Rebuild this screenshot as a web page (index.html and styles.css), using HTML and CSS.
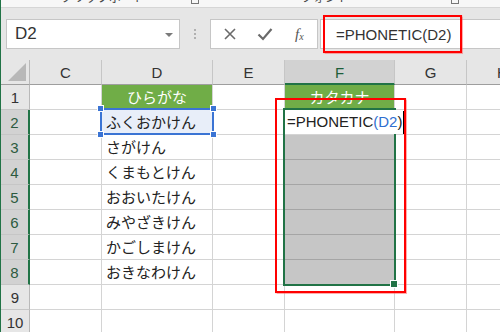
FILE: index.html
```html
<!DOCTYPE html>
<html lang="ja">
<head>
<meta charset="utf-8">
<link rel="stylesheet" href="styles.css">
</head>
<body>
<div class="app">
  <div class="ribbon">
    <span class="group g1">クリップボード</span>
    <span class="launch l1"></span>
    <span class="group g2">フォント</span>
    <span class="launch l2"></span>
  </div>
  <div class="fbar">
    <div class="namebox"><span>D2</span><span class="dd"></span></div>
    <div class="grip"><i></i><i></i><i></i></div>
    <div class="btns">
      <svg class="ic" width="14" height="14" viewBox="0 0 14 14"><path d="M2 2L12 12M12 2L2 12" stroke="#6a6a6a" stroke-width="1.6" fill="none"/></svg>
      <svg class="ic" width="16" height="14" viewBox="0 0 16 14"><path d="M1.5 7.5L6 12L14.5 2" stroke="#6a6a6a" stroke-width="2.2" fill="none"/></svg>
      <span class="fx">f<sub>x</sub></span>
    </div>
    <div class="finput">=PHONETIC(D2)</div>
  </div>
  <div class="sheet">
    <div class="c corner"><span class="tri"></span></div>
    <div class="c ch">C</div>
    <div class="c ch">D</div>
    <div class="c ch">E</div>
    <div class="c ch sel">F</div>
    <div class="c ch">G</div>
    <div class="c ch">H</div>

    <div class="c rh">1</div>
    <div class="c"></div><div class="c green">ひらがな</div><div class="c"></div><div class="c green">カタカナ</div><div class="c"></div><div class="c"></div>

    <div class="c rh sel">2</div>
    <div class="c"></div><div class="c txt act">ふくおかけん</div><div class="c"></div><div class="c"></div><div class="c"></div><div class="c"></div>

    <div class="c rh sel">3</div>
    <div class="c"></div><div class="c txt">さがけん</div><div class="c"></div><div class="c grey"></div><div class="c"></div><div class="c"></div>

    <div class="c rh sel">4</div>
    <div class="c"></div><div class="c txt">くまもとけん</div><div class="c"></div><div class="c grey"></div><div class="c"></div><div class="c"></div>

    <div class="c rh sel">5</div>
    <div class="c"></div><div class="c txt">おおいたけん</div><div class="c"></div><div class="c grey"></div><div class="c"></div><div class="c"></div>

    <div class="c rh sel">6</div>
    <div class="c"></div><div class="c txt">みやざきけん</div><div class="c"></div><div class="c grey"></div><div class="c"></div><div class="c"></div>

    <div class="c rh sel">7</div>
    <div class="c"></div><div class="c txt">かごしまけん</div><div class="c"></div><div class="c grey"></div><div class="c"></div><div class="c"></div>

    <div class="c rh sel">8</div>
    <div class="c"></div><div class="c txt">おきなわけん</div><div class="c"></div><div class="c grey"></div><div class="c"></div><div class="c"></div>

    <div class="c rh">9</div>
    <div class="c"></div><div class="c"></div><div class="c"></div><div class="c"></div><div class="c"></div><div class="c"></div>

    <div class="c rh">10</div>
    <div class="c"></div><div class="c"></div><div class="c"></div><div class="c"></div><div class="c"></div><div class="c"></div>
  </div>

  <div class="selD"></div>
  <span class="h h1"></span><span class="h h2"></span><span class="h h3"></span><span class="h h4"></span>
  <div class="rangeF"></div>
  <div class="editor">=PHONETIC<span class="ref">(D2</span>)<span class="caret"></span></div>
  <span class="fill"></span>
  <div class="red redF"></div>
  <div class="red redBar"></div>
  <div class="edge"></div>
</div>
</body>
</html>
```

FILE: styles.css
```css
* { box-sizing: border-box; }
html, body { margin: 0; padding: 0; background: #fff; }
.app {
  position: relative;
  width: 500px;
  height: 332px;
  overflow: hidden;
  font-family: "Liberation Sans", Arial, sans-serif;
}
.edge {
  position: absolute;
  left: 0; top: 0; bottom: 0;
  width: 1px;
  background: #217346;
}
.ribbon {
  position: relative;
  height: 8px;
  background: #f7f7f7;
  border-bottom: 1px solid #d6d6d6;
  overflow: hidden;
}
.group {
  position: absolute;
  top: -11px;
  font: 12px/16px "Noto Sans CJK JP", sans-serif;
  color: #444;
}
.g1 { left: 61px; }
.g2 { left: 301px; }
.launch {
  position: absolute;
  top: -4px;
  width: 8px; height: 8px;
  border: 1px solid #777;
}
.l1 { left: 191px; }
.l2 { left: 451px; }

.fbar {
  height: 52px;
  background: #e6e6e6;
  display: flex;
  align-items: flex-start;
  padding-top: 11px;
  padding-left: 6px;
}
.namebox {
  width: 174px;
  height: 30px;
  background: #fff;
  border: 1px solid #c6c6c6;
  display: flex;
  align-items: center;
  justify-content: space-between;
  padding: 0 6px 0 8px;
  font-size: 17px;
  color: #333;
}
.dd {
  width: 0; height: 0;
  border-left: 4px solid transparent;
  border-right: 4px solid transparent;
  border-top: 4px solid #7a7a7a;
  margin-top: 1px;
}
.grip {
  width: 30px;
  height: 30px;
  display: flex;
  flex-direction: column;
  align-items: center;
  justify-content: center;
  gap: 2px;
}
.grip i {
  width: 2px; height: 2px;
  background: #b0b0b0;
}
.btns {
  width: 108px;
  height: 30px;
  background: #fff;
  border: 1px solid #c6c6c6;
  display: flex;
  align-items: center;
  padding-left: 12px;
  gap: 20px;
}
.fx {
  font-family: "Liberation Serif", serif;
  font-style: italic;
  font-size: 15px;
  color: #555;
  margin-left: 2px;
}
.fx sub { font-size: 10px; vertical-align: -1px; }
.finput {
  flex: 1;
  height: 30px;
  margin-left: 2px;
  background: #fff;
  border-top: 1px solid #c6c6c6;
  border-bottom: 1px solid #c6c6c6;
  border-left: 1px solid #c6c6c6;
  padding-left: 15px;
  font-size: 15px;
  line-height: 29px;
  color: #333;
}

.sheet {
  display: grid;
  grid-template-columns: 30px 72px 111px 72px 110px 72px 72px;
  grid-template-rows: repeat(11, 25px);
  width: 539px;
}
.c {
  border-right: 1px solid #d4d4d4;
  border-bottom: 1px solid #d4d4d4;
  font: 15px/24px "Noto Sans CJK JP", sans-serif;
  color: #222;
  white-space: nowrap;
  overflow: hidden;
}
.corner {
  position: relative;
  background: #e6e6e6;
  border-right-color: #b9b9b9;
  border-bottom-color: #9e9e9e;
}
.tri {
  position: absolute;
  right: 3px; bottom: 3px;
  width: 0; height: 0;
  border-left: 18px solid transparent;
  border-bottom: 18px solid #b8b8b8;
}
.ch {
  background: #e6e6e6;
  border-right-color: #c6c6c6;
  border-bottom-color: #9e9e9e;
  text-align: center;
  font-family: "Liberation Sans", Arial, sans-serif;
  font-size: 15px;
  line-height: 25px;
  color: #333;
}
.ch.sel {
  background: #d2d2d2;
  border-bottom: 2px solid #217346;
  color: #1d5e3a;
}
.rh {
  background: #e6e6e6;
  border-right-color: #b9b9b9;
  border-bottom-color: #c6c6c6;
  text-align: center;
  font-family: "Liberation Sans", Arial, sans-serif;
  font-size: 15px;
  line-height: 25px;
  color: #333;
  padding-left: 1px;
}
.rh.sel {
  background: #d2d2d2;
  border-right: 2px solid #217346;
  color: #2c5a40;
}
.green {
  background: #70ad47;
  color: #fff;
  text-align: center;
}
.txt { padding-left: 4px; }
.act { background: #e8eef9; }
.grey {
  background: #c6c6c6;
  border-bottom-color: #a5a5a5;
}

.selD {
  position: absolute;
  left: 100px; top: 108px;
  width: 114px; height: 27px;
  border: 2px solid #3b74d4;
}
.h {
  position: absolute;
  width: 7px; height: 7px;
  background: #3b74d4;
  border: 1px solid #fff;
}
.h1 { left: 97px; top: 105px; }
.h2 { left: 210px; top: 105px; }
.h3 { left: 97px; top: 131px; }
.h4 { left: 210px; top: 131px; }

.rangeF {
  position: absolute;
  left: 283px; top: 108px;
  width: 113px; height: 178px;
  border: 2px solid #217346;
}
.editor {
  position: absolute;
  left: 285px; top: 110px;
  width: 121px; height: 24px;
  background: #fff;
  padding-left: 2px;
  font-size: 15px;
  line-height: 24px;
  color: #222;
  white-space: nowrap;
}
.ref { color: #2f6fd0; }
.caret {
  position: absolute;
  left: 118px; top: 1px;
  width: 2px; height: 23px;
  background: #000;
}
.fill {
  position: absolute;
  left: 390px; top: 280px;
  width: 8px; height: 8px;
  background: #217346;
  border: 1px solid #fff;
}
.red {
  position: absolute;
  border: 2px solid #f00;
  box-shadow: 0 0 1px 0.5px rgba(255, 90, 90, 0.5);
}
.redF { left: 275px; top: 98px; width: 131px; height: 195px; }
.redBar { left: 323px; top: 15px; width: 139px; height: 38px; }
```
